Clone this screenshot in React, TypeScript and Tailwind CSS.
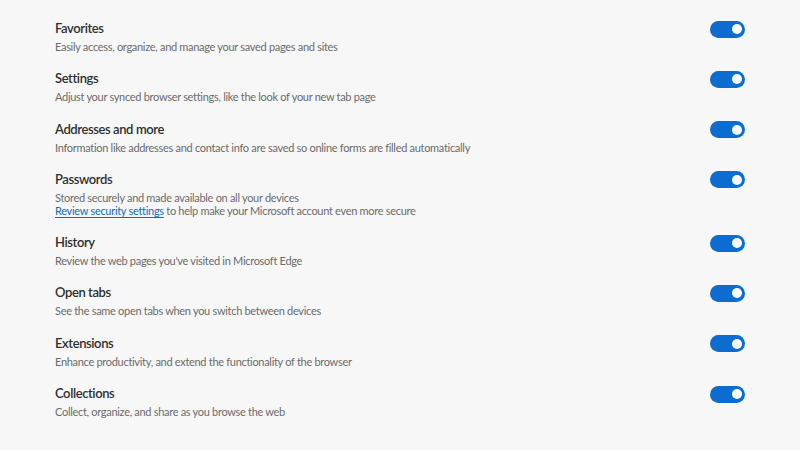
import React from 'react';

type Item = { title: string; desc: React.ReactNode };

const items: Item[] = [
  { title: 'Favorites', desc: 'Easily access, organize, and manage your saved pages and sites' },
  { title: 'Settings', desc: 'Adjust your synced browser settings, like the look of your new tab page' },
  {
    title: 'Addresses and more',
    desc: 'Information like addresses and contact info are saved so online forms are filled automatically',
  },
  {
    title: 'Passwords',
    desc: (
      <>
        <div>Stored securely and made available on all your devices</div>
        <div>
          <a className="text-[#0f6cbd] underline underline-offset-2 decoration-[#0f6cbd]">Review security settings</a>{' '}
          to help make your Microsoft account even more secure
        </div>
      </>
    ),
  },
  { title: 'History', desc: "Review the web pages you've visited in Microsoft Edge" },
  { title: 'Open tabs', desc: 'See the same open tabs when you switch between devices' },
  { title: 'Extensions', desc: 'Enhance productivity, and extend the functionality of the browser' },
  { title: 'Collections', desc: 'Collect, organize, and share as you browse the web' },
];

function Toggle() {
  return (
    <div className="w-[35px] h-[17px] rounded-full bg-[#0c6cd0] flex items-center justify-end pr-[3px]">
      <div className="w-[10px] h-[10px] rounded-full bg-white" />
    </div>
  );
}

export default function App() {
  return (
    <div
      className="w-[800px] h-[450px] bg-[#f7f7f7] overflow-hidden pt-[18px] pl-[55px] pr-[55px]"
      style={{ fontFamily: 'Lato, "Open Sans", sans-serif' }}
    >
      {items.map((it) => (
        <div key={it.title} className="pb-[15.3px]">
          <div className="flex items-center justify-between h-[20px]">
            <div className="text-[13px] font-semibold tracking-[-0.4px] text-[#2f2f2f] leading-[20px]">{it.title}</div>
            <div className="mt-[2px]">
              <Toggle />
            </div>
          </div>
          <div className="mt-[2px] text-[11px] tracking-[-0.3px] text-[#6b6b6b] leading-[13px]">{it.desc}</div>
        </div>
      ))}
    </div>
  );
}
